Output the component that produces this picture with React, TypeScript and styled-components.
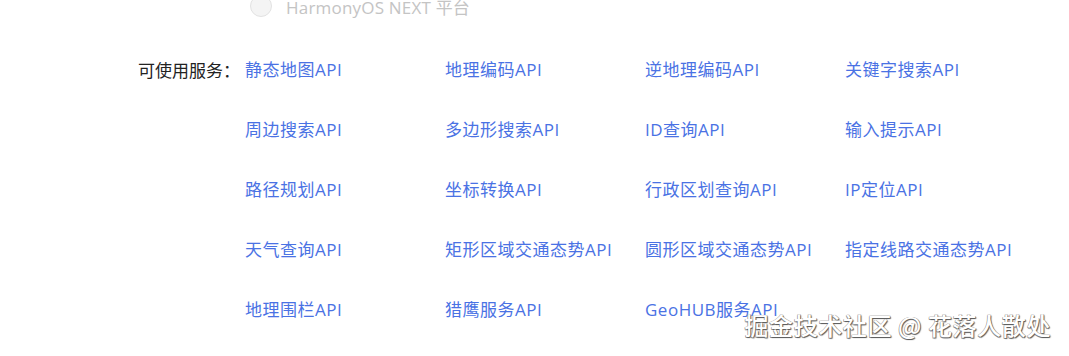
import React, { FC } from 'react';
import styled, { createGlobalStyle } from 'styled-components';

const services = [
  '静态地图API',
  '地理编码API',
  '逆地理编码API',
  '关键字搜索API',
  '周边搜索API',
  '多边形搜索API',
  'ID查询API',
  '输入提示API',
  '路径规划API',
  '坐标转换API',
  '行政区划查询API',
  'IP定位API',
  '天气查询API',
  '矩形区域交通态势API',
  '圆形区域交通态势API',
  '指定线路交通态势API',
  '地理围栏API',
  '猎鹰服务API',
  'GeoHUB服务API',
];

const App: FC = () => {
  return (
    <>
      <GlobalStyle />
      <Page>
        <PlatformRow>
          <Radio />
          <PlatformText>HarmonyOS NEXT 平台</PlatformText>
        </PlatformRow>

        <ServiceSection>
          <Label>可使用服务：</Label>
          <ServiceGrid>
            {services.map((name) => (
              <ServiceLink key={name} href="#">
                {name}
              </ServiceLink>
            ))}
          </ServiceGrid>
        </ServiceSection>

        <Watermark>掘金技术社区 @ 花落人散处</Watermark>
      </Page>
    </>
  );
};

const GlobalStyle = createGlobalStyle`
  html, body {
    margin: 0;
    padding: 0;
    background: #ffffff;
  }
  body {
    font-family: "Open Sans", "Noto Sans CJK SC", sans-serif;
  }
`;

const Page = styled.div`
  position: relative;
  width: 1069px;
  height: 356px;
  overflow: hidden;
  background: #ffffff;
`;

// 平台选择
const PlatformRow = styled.div`
  display: flex;
  align-items: center;
  gap: 14px;
  margin-top: -6px;
  padding-left: 250px;
  height: 24px;
`;

const Radio = styled.span`
  width: 22px;
  height: 22px;
  border-radius: 50%;
  border: 1px solid #e2e2e2;
  background: #f4f4f4;
  box-sizing: border-box;
  flex: none;
`;

const PlatformText = styled.span`
  font-size: 17px;
  color: #c4c4c4;
  white-space: nowrap;
  letter-spacing: 0.2px;
`;

// 可使用服务
const ServiceSection = styled.div`
  display: flex;
  align-items: flex-start;
  margin-top: 22px;
`;

const Label = styled.div`
  width: 245px;
  padding-right: 5px;
  box-sizing: border-box;
  text-align: right;
  font-size: 17px;
  line-height: 60px;
  color: #222222;
  font-family: "Noto Sans CJK SC", sans-serif;
`;

const ServiceGrid = styled.div`
  display: grid;
  grid-template-columns: repeat(4, 200px);
  grid-auto-rows: 60px;
`;

const ServiceLink = styled.a`
  font-size: 17px;
  line-height: 60px;
  color: #4a72e4;
  text-decoration: none;
  white-space: nowrap;
  letter-spacing: 0.5px;
`;

const Watermark = styled.div`
  position: absolute;
  right: 18px;
  bottom: 14px;
  font-size: 24px;
  font-weight: 500;
  font-family: "Noto Sans CJK SC", sans-serif;
  color: #ffffff;
  letter-spacing: 0.6px;
  text-shadow: 1px 1px 1px #5a5a5a, -0.5px -0.5px 0 #9a9a9a, 0.5px -0.5px 0 #9a9a9a,
    -0.5px 0.5px 0 #9a9a9a;
`;

export default App;
